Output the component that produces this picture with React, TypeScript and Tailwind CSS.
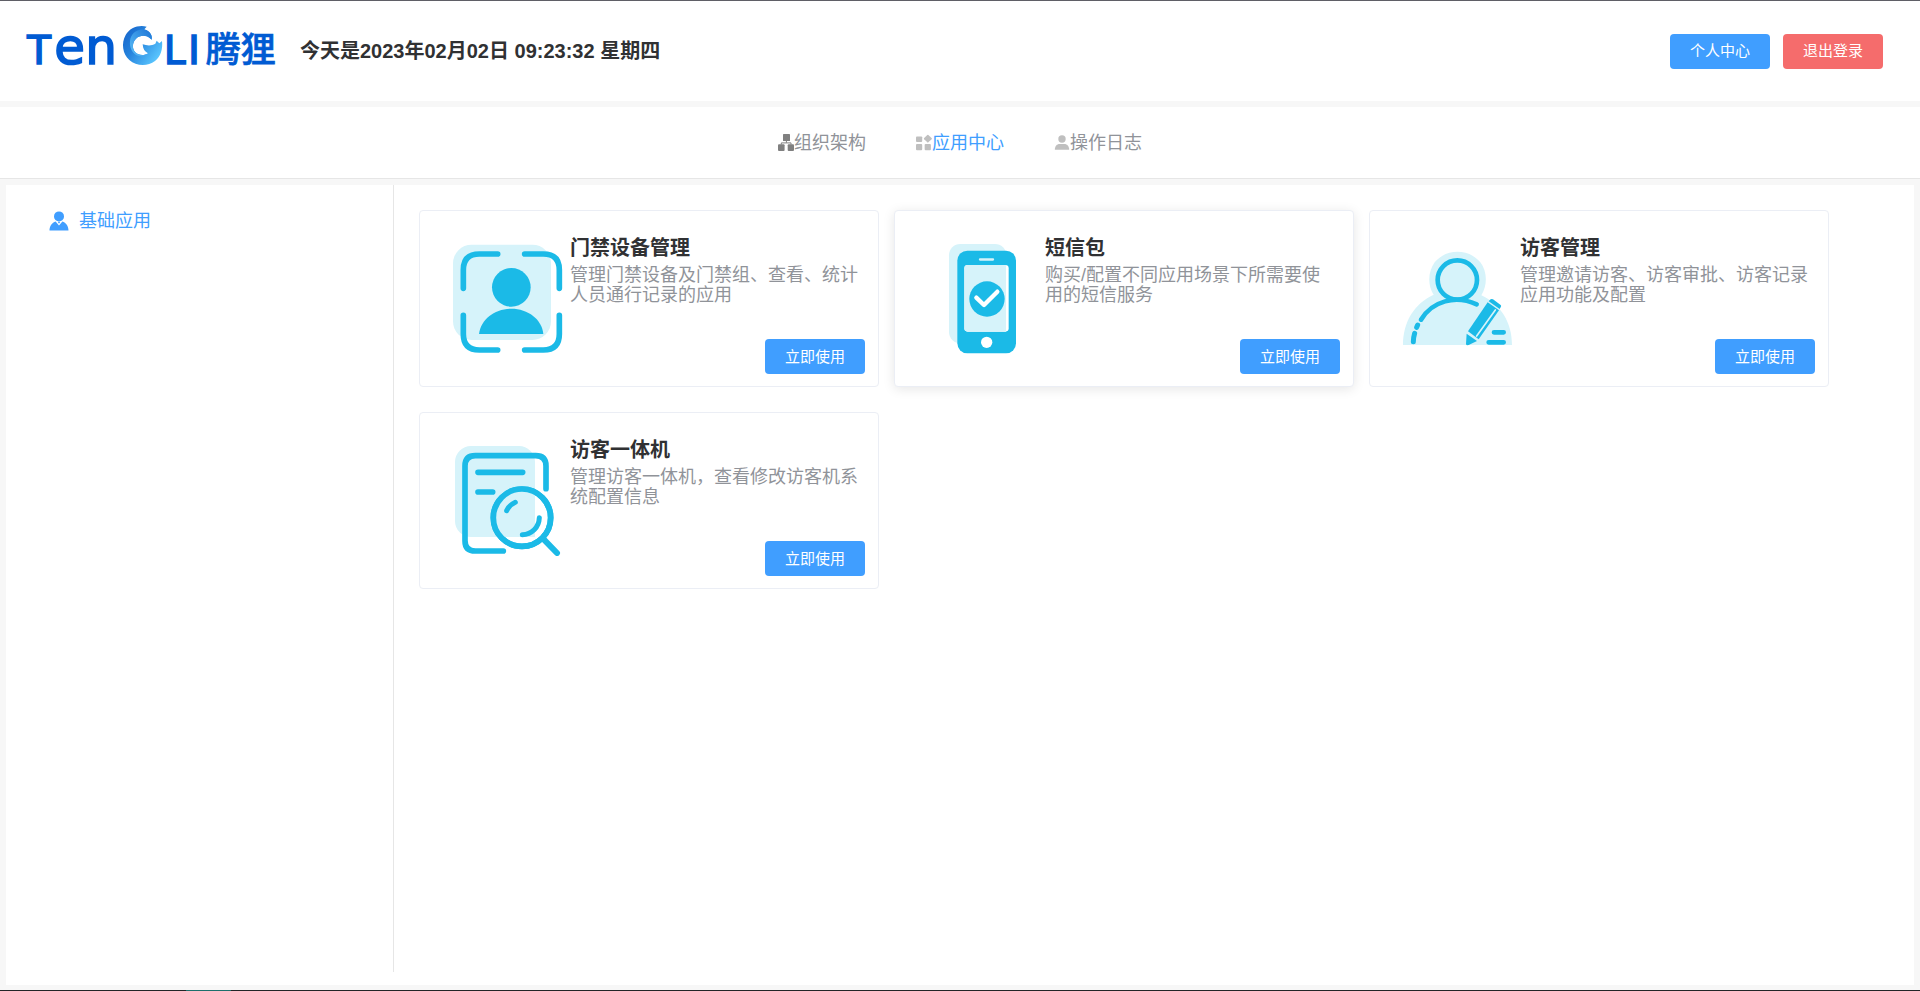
import type { ReactNode } from "react";

const CYAN = "#1bbae7";
const PALE = "#d6f3fa";

function Logo() {
  return (
    <svg viewBox="75 3 753 300" className="h-[100px] w-[251px] shrink-0" role="img" aria-label="TENGLI 腾狸">
      <defs>
        <linearGradient id="swirl" x1="0" y1="0" x2="1" y2="0.7">
          <stop offset="0" stopColor="#1560c8" />
          <stop offset="0.45" stopColor="#2583dd" />
          <stop offset="1" stopColor="#5cc8ff" />
        </linearGradient>
        <linearGradient id="swirlInner" x1="0" y1="1" x2="1" y2="0">
          <stop offset="0" stopColor="#5cc0f8" />
          <stop offset="1" stopColor="#1d74d6" />
        </linearGradient>
      </defs>
      <g fill="#005bd3" stroke="#005bd3" strokeWidth="5" fontFamily='"DejaVu Sans", sans-serif'>
        <text x="82" y="192" fontSize="116">T</text>
        <text x="163" y="191" fontSize="150">e</text>
        <text x="256" y="191" fontSize="150">n</text>
        <text x="492" y="192" fontSize="116">L</text>
        <text x="565" y="192" fontSize="116">I</text>
      </g>
      <text x="617" y="187" fontSize="105" fontWeight="500" fill="#005bd3" stroke="#005bd3" strokeWidth="2" fontFamily='"Noto Sans CJK SC", sans-serif'>
        腾狸
      </text>
      <path
        d="M440 80 C415 74 389 84 377 105 C363 130 368 162 388 180 C409 199 443 200 465 183 C482 170 489 148 486 123 L478 130 L470 122 L466 131 C455 138 441 137 428 133 C429 147 434 155 444 160 C433 168 416 167 406 157 C395 145 397 127 408 116 C420 105 438 105 449 114 L455 119 C459 108 450 93 433 88 Z"
        fill="url(#swirl)"
      />
      <path
        d="M427 88 C407 90 392 103 390 123 C388 143 397 158 410 166 C425 172 438 167 444 160 C433 168 416 167 406 157 C395 145 397 127 408 116 C420 105 438 105 449 114 L455 119 C458 102 445 90 427 88 Z"
        fill="url(#swirlInner)"
      />
    </svg>
  );
}

function OrgIcon() {
  return (
    <svg viewBox="0 0 16 17" className="h-[17px] w-4 shrink-0" fill="#808080" aria-hidden="true">
      <rect x="5" y="0" width="7" height="7" rx="0.6" />
      <rect x="0" y="10.3" width="6.6" height="6.7" rx="1" />
      <rect x="9.7" y="10.3" width="6.3" height="6.7" rx="1" />
      <path d="M8.4 6.5 V8.7 M3.3 10.5 V8.9 H13 V10.5" stroke="#808080" strokeWidth="1" fill="none" />
    </svg>
  );
}

function GridIcon() {
  return (
    <svg viewBox="0 0 17 17" className="h-[17px] w-4 shrink-0" fill="#bfbfbf" aria-hidden="true">
      <rect x="0" y="2" width="6.6" height="6" rx="1" />
      <rect x="0" y="10.2" width="6.6" height="6.6" rx="1" />
      <rect x="9.2" y="10.2" width="6.6" height="6.6" rx="1" />
      <rect x="9.4" y="1.2" width="6.4" height="6.4" rx="0.8" transform="rotate(45 12.6 4.4)" />
    </svg>
  );
}

function LogIcon() {
  return (
    <svg viewBox="0 0 16 17" className="h-[17px] w-4 shrink-0" fill="#bfbfbf" aria-hidden="true">
      <circle cx="8" cy="5" r="3.7" />
      <path d="M0.8 15.8 C0.8 12 3 9.9 5.6 9.9 H10.4 C13 9.9 15.2 12 15.2 15.8 Z" />
    </svg>
  );
}

function UserIcon() {
  return (
    <svg viewBox="0 0 20 20" className="size-5 shrink-0" fill="#409eff" aria-hidden="true">
      <circle cx="10" cy="5.4" r="5" />
      <path d="M0.5 19.6 C0.5 15 3 11.6 6.6 10.4 L10 14.4 L13.4 10.4 C17 11.6 19.5 15 19.5 19.6 Z" />
      <path d="M9 10.8 H11 L10.6 12.3 H9.4 Z" />
    </svg>
  );
}

function AccessArt() {
  return (
    <svg viewBox="129 132 330 330" className="size-[110px] shrink-0" aria-hidden="true">
      <rect x="129" y="134" width="294" height="286" rx="56" fill={PALE} />
      <g fill="none" stroke={CYAN} strokeWidth="17" strokeLinecap="round">
        <path d="M263 162 H208 Q160 162 160 210 V265" />
        <path d="M344 162 H400 Q448 162 448 210 V265" />
        <path d="M160 346 V402 Q160 450 208 450 H263" />
        <path d="M448 346 V402 Q448 450 400 450 H344" />
      </g>
      <circle cx="304" cy="262" r="58" fill={CYAN} />
      <path d="M207 402 C212 358 254 326 304 326 C354 326 396 358 400 402 Z" fill={CYAN} />
    </svg>
  );
}

function SmsArt() {
  return (
    <svg viewBox="144 132 330 330" className="size-[110px] shrink-0" aria-hidden="true">
      <rect x="207" y="132" width="172" height="298" rx="34" fill={PALE} />
      <rect x="232" y="152" width="176" height="308" rx="30" fill={CYAN} />
      <rect x="253" y="195" width="133" height="200" rx="10" fill="#fff" />
      <path d="M263 195 H378 V395 H263 Q253 395 253 385 V205 Q253 195 263 195 Z" fill={PALE} />
      <path d="M300 178.500 H339" stroke={PALE} strokeWidth="7" strokeLinecap="round" />
      <circle cx="321" cy="297" r="53" fill={CYAN} />
      <path d="M289 293 L312 315 L352 275" fill="none" stroke="#fff" strokeWidth="13" strokeLinecap="round" strokeLinejoin="round" />
      <circle cx="320" cy="427" r="17" fill="#fff" />
    </svg>
  );
}

function VisitorArt() {
  return (
    <svg viewBox="129 132 330 330" className="size-[110px] shrink-0" aria-hidden="true">
      <path
        d="M129 435 C129 366 163 310 221 284 C202 255 204 215 224 187 C258 145 327 145 361 187 C382 215 383 255 364 286 C421 313 456 366 456 435 Z"
        fill={PALE}
      />
      <g fill="none" stroke={CYAN} strokeLinecap="round">
        <circle cx="292" cy="240" r="59" strokeWidth="14" />
        <path d="M183 359 C217 303 286 284 350 313" strokeWidth="14" />
        <path d="M173 375 L170 382" strokeWidth="15" />
        <path d="M164 400 C161 410 160 417 160 425" strokeWidth="15" />
        <path d="M402 397 H431 M386 427 H431" strokeWidth="14" />
      </g>
      <path d="M399 298 L422 315 Q425 318 422 322 L419 327 L386 304 L390 299 Q394 295 399 298 Z" fill={CYAN} />
      <path d="M383 307 L417 331 L356 418 L324 394 Z" fill={CYAN} />
      <path d="M406 330 L350 408" stroke={PALE} strokeWidth="5" strokeLinecap="round" />
      <path d="M320 401 L351 423 L326 435 Q318 437 318 431 Z" fill={CYAN} />
    </svg>
  );
}

function KioskArt() {
  return (
    <svg viewBox="129 138 330 330" className="size-[110px] shrink-0" aria-hidden="true">
      <rect x="135" y="138" width="240" height="273" rx="48" fill={PALE} />
      <g fill="none" stroke={CYAN} strokeWidth="17" strokeLinecap="round">
        <path d="M280 453 H196 Q165 453 165 422 V198 Q165 167 196 167 H377 Q408 167 408 198 V266" />
        <path d="M204 217 H338 M204 276 H248" />
        <circle cx="336" cy="353" r="86" fill="#fff" />
      </g>
      <path d="M375 277 V411 H280 C240 380 242 320 280 288 C305 265 340 260 375 277 Z" fill={PALE} />
      <g fill="none" stroke={CYAN} strokeLinecap="round">
        <circle cx="336" cy="353" r="86" strokeWidth="17" />
        <path d="M402 419 L441 459" strokeWidth="18" />
        <path d="M290 332 Q298 315 316 307 M388 353 C387 382 365 404 337 404" strokeWidth="15" />
      </g>
    </svg>
  );
}

type AppInfo = { title: string; text: string; art: ReactNode; raised?: boolean };

const apps: AppInfo[] = [
  { title: "门禁设备管理", text: "管理门禁设备及门禁组、查看、统计人员通行记录的应用", art: <AccessArt /> },
  { title: "短信包", text: "购买/配置不同应用场景下所需要使用的短信服务", art: <SmsArt />, raised: true },
  { title: "访客管理", text: "管理邀请访客、访客审批、访客记录应用功能及配置", art: <VisitorArt /> },
  { title: "访客一体机", text: "管理访客一体机，查看修改访客机系统配置信息", art: <KioskArt /> },
];

function Button({ children, danger = false }: { children: ReactNode; danger?: boolean }) {
  return (
    <button
      type="button"
      className={`h-[35px] w-[100px] cursor-pointer rounded text-[15px] leading-5 text-white ${danger ? "bg-[#f56c6c]" : "bg-[#409eff]"}`}
    >
      {children}
    </button>
  );
}

function AppCard({ title, text, art, raised }: AppInfo) {
  return (
    <article
      className={`flex min-h-[177px] rounded border border-[#ebeef5] bg-white pt-[33px] pr-[13px] pb-3 pl-[33px] ${raised ? "shadow-[0_2px_12px_0_rgba(0,0,0,0.1)]" : ""}`}
    >
      {art}
      <div className="-mt-2 ml-[7px] flex flex-1 flex-col">
        <h2 className="text-xl leading-6 font-bold text-[#303133]">{title}</h2>
        <p className="mt-[5px] max-w-[290px] text-lg leading-5 text-[#909399]">{text}</p>
        <div className="mt-auto flex justify-end">
          <Button>立即使用</Button>
        </div>
      </div>
    </article>
  );
}

const tabs = [
  { label: "组织架构", icon: <OrgIcon /> },
  { label: "应用中心", icon: <GridIcon />, active: true },
  { label: "操作日志", icon: <LogIcon /> },
];

export default function App() {
  return (
    <div className='flex min-h-screen flex-col border-t border-[#5f5f66] bg-[#f7f7f7] font-["Liberation_Sans","Noto_Sans_CJK_SC",sans-serif]'>
      <header className="flex h-[100px] items-center bg-white pr-[37px] pl-[25px]">
        <Logo />
        <p className="ml-6 text-xl font-bold text-[#303133]">今天是2023年02月02日 09:23:32 星期四</p>
        <div className="ml-auto flex gap-[13px]">
          <Button>个人中心</Button>
          <Button danger>退出登录</Button>
        </div>
      </header>

      <nav className="mt-1.5 flex h-[72px] items-center justify-center gap-[50px] border-b border-[#e6e6e6] bg-white">
        {tabs.map((tab) => (
          <a
            key={tab.label}
            href="#"
            aria-current={tab.active ? "page" : undefined}
            className={`flex items-center text-lg leading-6 ${tab.active ? "text-[#409eff]" : "text-[#909399]"}`}
          >
            {tab.icon}
            {tab.label}
          </a>
        ))}
      </nav>

      <div className="m-1.5 mb-[5px] flex flex-1 bg-white pb-[13px]">
        <aside className="w-[388px] shrink-0 border-r border-[#e6e6e6] pt-6 pl-[43px]">
          <a href="#" className="flex items-center gap-2.5 text-lg leading-6 text-[#409eff]">
            <UserIcon />
            基础应用
          </a>
        </aside>
        <main className="grid flex-1 grid-cols-[repeat(auto-fill,460px)] content-start gap-x-[15px] gap-y-[25px] p-[25px]">
          {apps.map((app) => (
            <AppCard key={app.title} {...app} />
          ))}
        </main>
      </div>

      <div className="flex h-px bg-[#222427] pl-[186px]">
        <div className="w-[45px] bg-[#1d6f6c]" />
      </div>
    </div>
  );
}
